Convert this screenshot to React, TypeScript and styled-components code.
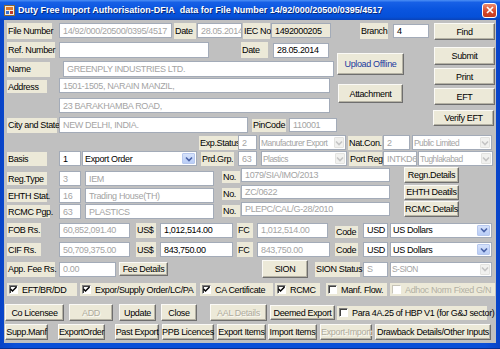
import React from "react";
import styled, { createGlobalStyle } from "styled-components";

const FONT = `"Liberation Sans", Arial, sans-serif`;

const Global = createGlobalStyle`
  html, body { margin: 0; padding: 0; background: #ffffff; }
  body { font-family: ${FONT}; font-size: 9px; letter-spacing: -0.35px; color: #000; }
  * { box-sizing: border-box; }
`;

const Window = styled.div`
  width: 500px;
  height: 349px;
  display: flex;
  flex-direction: column;
  overflow: hidden;
  background: #0a49d4;
`;

const TitleBar = styled.div`
  flex: none;
  height: 20px;
  display: flex;
  align-items: center;
  padding: 0 3px 0 4px;
  background: linear-gradient(to bottom, #4d8ff5 0%, #1760e6 12%, #0a55df 45%, #0550d8 85%, #0a43b8 100%);
  color: #fff;
`;

const TitleText = styled.div`
  flex: 1;
  margin-left: 3px;
  font-weight: bold;
  font-size: 9px;
  letter-spacing: 0;
  white-space: nowrap;
  text-shadow: 1px 1px 0 #0a2c7a;
`;

const CloseBtn = styled.div`
  flex: none;
  width: 15px;
  height: 15px;
  border: 1px solid #fff;
  border-radius: 3px;
  background: linear-gradient(to bottom, #ea8a6e, #d5462a 60%, #c23a1e);
  display: flex;
  align-items: center;
  justify-content: center;
`;

const Frame = styled.div`
  flex: 1;
  display: flex;
  padding: 0 4px 5px 4px;
  background: linear-gradient(to right, #0843c6, #0a4fd8 3%, #0a4fd8 97%, #0843c6);
  border-bottom: 1px solid #062f95;
`;

const Body = styled.div`
  flex: 1;
  display: flex;
  flex-direction: column;
  background: #c0c0c0;
  overflow: hidden;
`;

const Section = styled.div<{ $mt?: number }>`
  flex: none;
  display: flex;
  align-items: flex-start;
  margin-top: ${(p) => p.$mt ?? 0}px;
`;

const Column = styled.div<{ $w: number; $ml?: number }>`
  flex: none;
  width: ${(p) => p.$w}px;
  margin-left: ${(p) => p.$ml ?? 0}px;
  display: flex;
  flex-direction: column;
`;

const Row = styled.div<{ $h: number; $mt?: number }>`
  flex: none;
  display: flex;
  align-items: center;
  height: ${(p) => p.$h}px;
  margin-top: ${(p) => p.$mt ?? 0}px;
`;

const Label = styled.div<{ $w: number; $ml?: number; $h?: number; $end?: boolean }>`
  flex: none;
  width: ${(p) => p.$w}px;
  height: ${(p) => p.$h ?? 15}px;
  margin-left: ${(p) => p.$ml ?? 0}px;
  align-self: ${(p) => (p.$end ? "flex-end" : "auto")};
  background: #ece9d8;
  display: flex;
  align-items: center;
  padding-left: 1px;
  white-space: nowrap;
`;

const Field = styled.div<{ $w: number; $ml?: number; $h?: number; $dim?: boolean; $beige?: boolean }>`
  flex: none;
  width: ${(p) => p.$w}px;
  height: ${(p) => p.$h ?? 15}px;
  margin-left: ${(p) => p.$ml ?? 0}px;
  background: ${(p) => (p.$beige ? "#ece9d8" : "#ffffff")};
  border: 1px solid #a3abb8;
  color: ${(p) => (p.$dim ? "#a4a4a4" : "#000")};
  padding-left: 3px;
  display: flex;
  align-items: center;
  white-space: nowrap;
  overflow: hidden;
`;

const ComboBox = styled.div<{ $w: number; $ml?: number }>`
  flex: none;
  width: ${(p) => p.$w}px;
  height: 15px;
  margin-left: ${(p) => p.$ml ?? 0}px;
  background: #fff;
  border: 1px solid #a3abb8;
  display: flex;
  align-items: stretch;
`;

const ComboText = styled.div<{ $dim?: boolean }>`
  flex: 1;
  min-width: 0;
  padding-left: ${(p) => (p.$dim ? 1 : 2)}px;
  display: flex;
  align-items: center;
  white-space: nowrap;
  overflow: hidden;
  font-size: ${(p) => (p.$dim ? "8.4px" : "9px")};
  letter-spacing: ${(p) => (p.$dim ? "-0.5px" : "-0.35px")};
  color: ${(p) => (p.$dim ? "#a4a4a4" : "#000")};
`;

const ComboArrow = styled.div<{ $dim?: boolean }>`
  flex: none;
  width: ${(p) => (p.$dim ? 10 : 13)}px;
  margin: 1px;
  border-radius: 1px;
  background: ${(p) => (p.$dim ? "#f1f1ef" : "linear-gradient(to bottom, #d6e2fb, #b9cdf6)")};
  border: 1px solid ${(p) => (p.$dim ? "#e3e3e0" : "#b7c8ee")};
  display: flex;
  align-items: center;
  justify-content: center;
`;

const Btn = styled.button<{ $w: number; $h: number; $ml?: number; $mt?: number; $blue?: boolean }>`
  flex: none;
  width: ${(p) => p.$w}px;
  height: ${(p) => p.$h}px;
  margin: ${(p) => p.$mt ?? 0}px 0 0 ${(p) => p.$ml ?? 0}px;
  padding: 0;
  background: #ece9d8;
  border: 1px solid;
  border-color: #fbfaf6 #6e6e6e #6e6e6e #fbfaf6;
  box-shadow: inset -1px -1px 0 #b5b2a4;
  font-family: ${FONT};
  font-size: 9px;
  letter-spacing: -0.35px;
  color: ${(p) => (p.$blue ? "#1b3a9e" : "#000")};
  white-space: nowrap;
  overflow: visible;
  display: flex;
  align-items: center;
  justify-content: center;
  &:disabled {
    color: #aeab9d;
    text-shadow: 1px 1px 0 #fbfaf4;
  }
`;

const CheckWrap = styled.div<{ $w: number; $ml?: number; $h?: number; $dim?: boolean }>`
  flex: none;
  width: ${(p) => p.$w}px;
  height: ${(p) => p.$h ?? 13}px;
  margin-left: ${(p) => p.$ml ?? 0}px;
  background: #ece9d8;
  display: flex;
  align-items: center;
  gap: 4px;
  padding-left: 2px;
  white-space: nowrap;
  color: ${(p) => (p.$dim ? "#b2b0a4" : "#000")};
`;

const Box = styled.span<{ $dim?: boolean }>`
  flex: none;
  width: 9px;
  height: 9px;
  background: #fff;
  border: 1px solid;
  border-color: ${(p) => (p.$dim ? "#c6c4b8 #fff #fff #c6c4b8" : "#808080 #fff #fff #808080")};
  box-shadow: ${(p) => (p.$dim ? "none" : "inset 1px 1px 0 #404040")};
  display: flex;
  align-items: center;
  justify-content: center;
`;

const Chevron = ({ dim }: { dim?: boolean }) => (
  <svg width="8" height="6" viewBox="0 0 8 6">
    <path d="M1 1.5 L4 4.5 L7 1.5" fill="none" stroke={dim ? "#c4c4c4" : "#4a63a8"} strokeWidth="1.6" />
  </svg>
);

const Combo = ({ w, ml, text, dim }: { w: number; ml?: number; text: string; dim?: boolean }) => (
  <ComboBox $w={w} $ml={ml}>
    <ComboText $dim={dim}>{text}</ComboText>
    <ComboArrow $dim={dim}>
      <Chevron dim={dim} />
    </ComboArrow>
  </ComboBox>
);

const Check = ({ w, ml, text, checked, dim, h }: { w: number; ml?: number; text: string; checked?: boolean; dim?: boolean; h?: number }) => (
  <CheckWrap $w={w} $ml={ml} $dim={dim} $h={h}>
    <Box $dim={dim}>
      {checked && (
        <svg width="7" height="7" viewBox="0 0 7 7">
          <path d="M0.5 3 L2.5 5 L6.5 1" fill="none" stroke="#000" strokeWidth="1.5" />
        </svg>
      )}
    </Box>
    <span>{text}</span>
  </CheckWrap>
);

const AppIcon = () => (
  <svg width="11" height="11" viewBox="0 0 11 11">
    <rect x="0.5" y="0.5" width="10" height="10" fill="#f3ece0" stroke="#8a6a3a" />
    <rect x="2" y="2" width="7" height="3" fill="#e07a2a" />
    <rect x="2" y="6" width="3" height="3" fill="#3a6fd0" />
    <rect x="6" y="6" width="3" height="3" fill="#c03a2a" />
  </svg>
);

export default function App() {
  return (
    <>
      <Global />
      <Window>
        <TitleBar>
          <AppIcon />
          <TitleText>Duty Free Import Authorisation-DFIA&nbsp; data for File Number 14/92/000/20500/0395/4517</TitleText>
          <CloseBtn>
            <svg width="8" height="8" viewBox="0 0 8 8">
              <path d="M1 1 L7 7 M7 1 L1 7" stroke="#fff" strokeWidth="1.7" />
            </svg>
          </CloseBtn>
        </TitleBar>
        <Frame>
          <Body>
            <Section $mt={2}>
              <Column $w={333}>
                <Row $h={17}>
                  <Label $w={45} $ml={3} $h={16}>File Number</Label>
                  <Field $w={113} $ml={7} $dim>14/92/000/20500/0395/4517</Field>
                  <Label $w={22} $ml={2} $h={16}>Date</Label>
                  <Field $w={45} $ml={1} $dim>28.05.2014</Field>
                  <Label $w={27} $ml={1} $h={16}>IEC No</Label>
                  <Field $w={60} $ml={1} $beige>1492000205</Field>
                </Row>
                <Row $h={16} $mt={3}>
                  <Label $w={48} $ml={3} $h={16}>Ref. Number</Label>
                  <Field $w={150} $ml={4} $h={16} />
                  <Label $w={27} $ml={32} $h={16}>Date</Label>
                  <Field $w={56} $ml={5}>28.05.2014</Field>
                </Row>
                <Row $h={16} $mt={3}>
                  <Label $w={43} $ml={3} $h={15}>Name</Label>
                  <Field $w={271} $ml={13} $h={16} $dim>GREENPLY INDUSTRIES LTD.</Field>
                </Row>
                <Row $h={15} $mt={1}>
                  <Label $w={40} $ml={3} $h={13} $end>Address</Label>
                  <Field $w={271} $ml={12} $dim>1501-1505, NARAIN MANZIL,</Field>
                </Row>
                <Row $h={15} $mt={5}>
                  <Field $w={271} $ml={55} $dim>23 BARAKHAMBA ROAD,</Field>
                </Row>
                <Row $h={16} $mt={4}>
                  <Label $w={50} $ml={3} $h={15}>City and State</Label>
                  <Field $w={189} $ml={2} $h={16} $dim>NEW DELHI, INDIA.</Field>
                  <Label $w={34} $ml={4} $h={13}>PinCode</Label>
                  <Field $w={48} $ml={3} $h={14} $dim>110001</Field>
                </Row>
              </Column>
              <Column $w={94}>
                <Row $h={17}>
                  <Label $w={28} $ml={23} $h={16}>Branch</Label>
                  <Field $w={36} $ml={5} $h={14}>4</Field>
                </Row>
                <Btn $w={67} $h={22} $mt={14} $blue>Upload Offline</Btn>
                <Btn $w={65} $h={19} $mt={9} $ml={1}>Attachment</Btn>
              </Column>
              <Column $w={61} $ml={3}>
                <Btn $w={61} $h={17} $mt={1}>Find</Btn>
                <Btn $w={61} $h={18} $mt={7}>Submit</Btn>
                <Btn $w={61} $h={17} $mt={3}>Print</Btn>
                <Btn $w={61} $h={17} $mt={3}>EFT</Btn>
                <Btn $w={61} $h={16} $mt={5} $ml={-1}>Verify EFT</Btn>
              </Column>
            </Section>

            <Row $h={15} $mt={2}>
              <Label $w={39} $ml={195} $h={14}>Exp.Status</Label>
              <Field $w={19} $ml={0} $dim>2</Field>
              <Combo w={87} ml={2} text="Manufacturer Export" dim />
              <Label $w={34} $ml={2} $h={14}>Nat.Con.</Label>
              <Field $w={27} $ml={1} $dim>2</Field>
              <Combo w={80} ml={2} text="Public Limited" dim />
            </Row>
            <Row $h={15} $mt={1}>
              <Label $w={40} $ml={3} $h={14}>Basis</Label>
              <Field $w={22} $ml={12}>1</Field>
              <Combo w={115} ml={1} text="Export Order" />
              <Label $w={33} $ml={4} $h={14}>Prd.Grp.</Label>
              <Field $w={19} $ml={4} $dim>63</Field>
              <Combo w={86} ml={4} text="Plastics" dim />
              <Label $w={33} $ml={2} $h={14}>Port Reg</Label>
              <Field $w={34} $ml={1} $dim>INTKD6</Field>
              <Combo w={75} ml={1} text="Tughlakabad" dim />
            </Row>

            <Section $mt={1}>
              <Column $w={210}>
                <Row $h={15} $mt={4}>
                  <Label $w={40} $ml={3} $h={13}>Reg.Type</Label>
                  <Field $w={22} $ml={12} $dim>3</Field>
                  <Field $w={129} $ml={4} $dim>IEM</Field>
                </Row>
                <Row $h={15} $mt={2}>
                  <Label $w={40} $ml={3} $h={13}>EHTH Stat.</Label>
                  <Field $w={22} $ml={12} $dim>16</Field>
                  <Field $w={129} $ml={4} $dim>Trading House(TH)</Field>
                </Row>
                <Row $h={15} $mt={1}>
                  <Label $w={43} $ml={3} $h={13}>RCMC Pgp.</Label>
                  <Field $w={22} $ml={9} $dim>63</Field>
                  <Field $w={129} $ml={4} $dim>PLASTICS</Field>
                </Row>
              </Column>
              <Column $w={237} $ml={8}>
                <Row $h={16}>
                  <Label $w={18} $h={12} $end>No.</Label>
                  <Field $w={149} $ml={1} $h={14} $dim>1079/SIA/IMO/2013</Field>
                  <Btn $w={55} $h={16} $ml={14}>Regn.Details</Btn>
                </Row>
                <Row $h={16} $mt={1}>
                  <Label $w={18} $h={12} $end>No.</Label>
                  <Field $w={149} $ml={1} $h={14} $dim>ZC/0622</Field>
                  <Btn $w={55} $h={15} $ml={14}>EHTH Deatils</Btn>
                </Row>
                <Row $h={16} $mt={1}>
                  <Label $w={18} $h={12} $end>No.</Label>
                  <Field $w={149} $ml={1} $h={14} $dim>PLEPC/CAL/G-28/2010</Field>
                  <Btn $w={55} $h={16} $ml={14}>RCMC Details</Btn>
                </Row>
              </Column>
            </Section>

            <Row $h={16} $mt={3}>
              <Label $w={34} $ml={3} $h={14}>FOB Rs.</Label>
              <Field $w={71} $ml={18} $dim>60,852,091.40</Field>
              <Label $w={20} $ml={6} $h={15}>US$</Label>
              <Field $w={73} $ml={4}>1,012,514.00</Field>
              <Label $w={16} $ml={4} $h={15}>FC</Label>
              <Field $w={71} $ml={4} $dim>1,012,514.00</Field>
              <Label $w={23} $ml={7} $h={12} $end>Code</Label>
              <Field $w={25} $ml={5}>USD</Field>
              <Combo w={102} ml={2} text="US Dollars" />
            </Row>
            <Row $h={15} $mt={4}>
              <Label $w={34} $ml={3} $h={13}>CIF Rs.</Label>
              <Field $w={71} $ml={18} $dim>50,709,375.00</Field>
              <Label $w={20} $ml={6} $h={15}>US$</Label>
              <Field $w={73} $ml={4}>843,750.00</Field>
              <Label $w={16} $ml={4} $h={15}>FC</Label>
              <Field $w={73} $ml={4} $dim>843,750.00</Field>
              <Label $w={23} $ml={5} $h={13}>Code</Label>
              <Field $w={25} $ml={5}>USD</Field>
              <Combo w={102} ml={2} text="US Dollars" />
            </Row>
            <Row $h={18} $mt={3}>
              <Label $w={48} $ml={3} $h={15}>App. Fee Rs.</Label>
              <Field $w={57} $ml={4} $dim>0.00</Field>
              <Btn $w={49} $h={14} $ml={3}>Fee Details</Btn>
              <Btn $w={46} $h={18} $ml={94}>SION</Btn>
              <Label $w={45} $ml={7} $h={15}>SION Status</Label>
              <Field $w={25} $ml={3} $dim>S</Field>
              <Combo w={102} ml={2} text="S-SION" dim />
            </Row>

            <Row $h={13} $mt={5}>
              <Check w={70} ml={3} text="EFT/BR/DD" checked />
              <Check w={116} ml={3} text="Expor/Supply Order/LC/PA" checked />
              <Check w={73} ml={4} text="CA Certificate" checked />
              <Check w={45} ml={2} text="RCMC" checked />
              <Check w={61} ml={6} text="Manf. Flow." />
              <Check w={105} ml={3} text="Adhoc Norm Fixed G/N" dim />
            </Row>

            <Row $h={17} $mt={8}>
              <Btn $w={59} $h={17} $ml={1}>Co Licensee</Btn>
              <Btn $w={44} $h={17} $ml={5} disabled>ADD</Btn>
              <Btn $w={37} $h={17} $ml={6}>Update</Btn>
              <Btn $w={36} $h={17} $ml={5}>Close</Btn>
              <Btn $w={57} $h={17} $ml={13} disabled>AAL Details</Btn>
              <Btn $w={65} $h={15} $ml={3}>Deemed Export</Btn>
              <Check w={150} ml={2} h={14} text="Para 4A.25 of HBP V1 (for G&J sector)" />
            </Row>
            <Row $h={16} $mt={3}>
              <Btn $w={43} $h={16} $ml={1}>Supp.Manf</Btn>
              <Btn $w={47} $h={16} $ml={10}>ExportOrder</Btn>
              <Btn $w={44} $h={16} $ml={10}>Past Export</Btn>
              <Btn $w={52} $h={16} $ml={3}>PPB Licences</Btn>
              <Btn $w={49} $h={16} $ml={3}>Export Items</Btn>
              <Btn $w={49} $h={16} $ml={2}>Import Items</Btn>
              <Btn $w={52} $h={16} $ml={3} disabled>Export-Import</Btn>
              <Btn $w={116} $h={16} $ml={3}>Drawback Details/Other Inputs</Btn>
            </Row>
          </Body>
        </Frame>
      </Window>
    </>
  );
}
